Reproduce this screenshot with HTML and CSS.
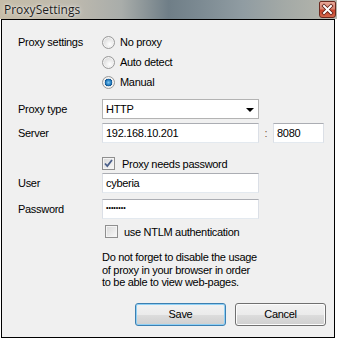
FILE: index.html
```html
<!DOCTYPE html>
<html>
<head>
<meta charset="utf-8">
<link rel="stylesheet" href="styles.css">
</head>
<body>
<div class="titlebar">
  <span class="title">ProxySettings</span>
  <span class="close">
    <svg width="15" height="15" viewBox="0 0 15 15">
      <path d="M4 4 L11 11 M11 4 L4 11" stroke="#5a1a10" stroke-width="3.6" stroke-linecap="square"/>
      <path d="M4 4 L11 11 M11 4 L4 11" stroke="#ffffff" stroke-width="2" stroke-linecap="square"/>
    </svg>
  </span>
</div>
<div class="frame">
  <div class="row row-radios">
    <div class="label label-top">Proxy settings</div>
    <div class="radios">
      <div class="opt"><span class="radio"></span><span>No proxy</span></div>
      <div class="opt"><span class="radio"></span><span>Auto detect</span></div>
      <div class="opt"><span class="radio checked"></span><span>Manual</span></div>
    </div>
  </div>
  <div class="row row-type">
    <div class="label">Proxy type</div>
    <div class="select"><span>HTTP</span><span class="arrow"></span></div>
  </div>
  <div class="row row-server">
    <div class="label">Server</div>
    <div class="input wide">192.168.10.201</div>
    <span class="colon">:</span>
    <div class="input port">8080</div>
  </div>
  <div class="row row-check1">
    <div class="label"></div>
    <span class="check checked">
      <svg width="11" height="11" viewBox="0 0 11 11"><path d="M2 5.5 L4.3 8 L9 2" fill="none" stroke="#4a5f8a" stroke-width="1.8"/></svg>
    </span>
    <span class="check-label">Proxy needs password</span>
  </div>
  <div class="row row-user">
    <div class="label">User</div>
    <div class="input wide">cyberia</div>
  </div>
  <div class="row row-pass">
    <div class="label">Password</div>
    <div class="input wide pw">••••••••</div>
  </div>
  <div class="row row-check2">
    <div class="label"></div>
    <span class="check ntlm"></span>
    <span class="check-label">use NTLM authentication</span>
  </div>
  <div class="row row-note">
    <div class="label"></div>
    <p class="note">Do not forget to disable the usage<br>of proxy in your browser in order<br>to be able to view web-pages.</p>
  </div>
  <div class="buttons">
    <button class="btn default">Save</button>
    <button class="btn">Cancel</button>
  </div>
</div>
</body>
</html>
```
FILE: styles.css
```css
html, body {
  margin: 0;
  padding: 0;
  background: #ffffff;
}
body {
  width: 337px;
  height: 340px;
  overflow: hidden;
  font-family: "Liberation Sans", Arial, sans-serif;
  font-size: 11px;
  letter-spacing: -0.3px;
  color: #000;
}
.titlebar {
  height: 19px;
  display: flex;
  align-items: center;
  justify-content: space-between;
  background: linear-gradient(90deg, #c6bda8 0%, #bdb9ae 22%, #a9adaa 36%, #6f7e87 50%, #7d8b93 60%, #909ca2 72%, #a3a9a6 84%, #b7b7ad 100%);
}
.title {
  margin-left: 4px;
  margin-top: -1px;
  font-family: "Open Sans", "Noto Sans", sans-serif;
  font-size: 12px;
  letter-spacing: 0;
  color: #1d1d1d;
  text-shadow: 0 0 5px rgba(255,255,255,0.8), 0 0 2px rgba(255,255,255,0.6);
}
.close {
  width: 15px;
  height: 15px;
  margin-right: 1px;
  margin-top: -1px;
  border: 1px solid #6b2a20;
  border-radius: 2px 2px 3px 3px;
  background: linear-gradient(180deg, #e9a898 0%, #d98571 45%, #c8432b 55%, #d4674c 100%);
  display: flex;
  align-items: center;
  justify-content: center;
}
.close svg { display: block; }
.frame {
  margin-left: 1px;
  width: 332px;
  height: 317px;
  border: 1px solid #000;
  background: #f0f0f0;
  padding: 12px 0 0 16px;
  box-sizing: border-box;
  box-sizing: content-box;
  width: 316px;
  height: 305px;
}
.row {
  display: flex;
  align-items: center;
}
.label {
  width: 84px;
  flex: none;
}
.row-radios { align-items: flex-start; }
.label-top { line-height: 20px; }
.radios { display: flex; flex-direction: column; }
.opt {
  height: 20px;
  display: flex;
  align-items: center;
  gap: 5px;
}
.radio {
  width: 11px;
  height: 11px;
  border-radius: 50%;
  border: 1px solid #9a9a9a;
  background: radial-gradient(circle at 60% 65%, #ffffff 0%, #e8e8e8 45%, #cfcfcf 100%);
  box-shadow: inset 0 0 0 1px #f4f4f4;
}
.radio.checked {
  background: radial-gradient(circle at 50% 50%, #7ec4ef 0%, #2d86c7 30%, #0b4f8c 48%, #e8e8e8 52%, #d6d6d6 100%);
}
.row-type { margin-top: 7px; }
.select {
  width: 155px;
  height: 18px;
  border: 1px solid #b3b3b3;
  background: #fff;
  display: flex;
  align-items: center;
  justify-content: space-between;
  padding-left: 3px;
  padding-right: 4px;
  box-sizing: content-box;
  width: 148px;
}
.arrow {
  width: 0;
  height: 0;
  border-left: 4px solid transparent;
  border-right: 4px solid transparent;
  border-top: 4px solid #000;
  margin-top: 2px;
}
.row-server { margin-top: 4px; }
.input {
  height: 18px;
  border: 1px solid #dbdfe6;
  border-top-color: #abadb3;
  border-bottom-color: #e3e9ef;
  background: #fff;
  display: flex;
  align-items: center;
  padding-left: 3px;
  box-sizing: border-box;
  height: 20px;
}
.wide { width: 157px; }
.colon {
  width: 14px;
  text-align: center;
  color: #7a5a3a;
}
.port { width: 51px; }
.row-check1 { margin-top: 14px; height: 13px; }
.check {
  width: 13px;
  height: 13px;
  box-sizing: border-box;
  border: 1px solid #8f8f8f;
  background: linear-gradient(135deg, #d8d8d8 0%, #ececec 60%, #fafafa 100%);
  box-shadow: inset 0 0 0 1px #f4f4f4;
  display: flex;
  align-items: center;
  justify-content: center;
  flex: none;
}
.check svg { display: block; }
.check-label { margin-left: 7px; }
.row-user { margin-top: 3px; }
.row-pass { margin-top: 6px; }
.pw { font-size: 7px; letter-spacing: 0; padding-bottom: 3px; }
.row-check2 { margin-top: 6px; height: 13px; }
.ntlm { margin-left: 3px; }
.ntlm + .check-label { margin-left: 6px; }
.row-note { margin-top: 13px; align-items: flex-start; }
.note {
  margin: 0;
  line-height: 12.5px;
}
.buttons {
  display: flex;
  gap: 9px;
  margin-top: 14px;
  margin-left: 117px;
}
.btn {
  width: 91px;
  height: 23px;
  font-family: "Liberation Sans", Arial, sans-serif;
  font-size: 11px;
  letter-spacing: -0.3px;
  color: #000;
  border: 1px solid #707070;
  border-radius: 3px;
  background: linear-gradient(180deg, #f2f2f2 0%, #ebebeb 50%, #dddddd 51%, #cfcfcf 100%);
  box-shadow: inset 0 0 0 1px #fcfcfc;
  padding: 0;
}
.btn.default {
  border-color: #3c7fb1;
  box-shadow: inset 0 0 0 1px #48d8fb, inset 0 0 0 2px #f4fbfe;
  background: linear-gradient(180deg, #eaf6fd 0%, #d9f0fc 50%, #bee6fd 51%, #a7d9f5 100%);
  background: linear-gradient(180deg, #f2f2f2 0%, #ebebeb 50%, #dddddd 51%, #cfcfcf 100%);
  box-shadow: inset 0 0 0 1px #8fd0f5;
}
```
